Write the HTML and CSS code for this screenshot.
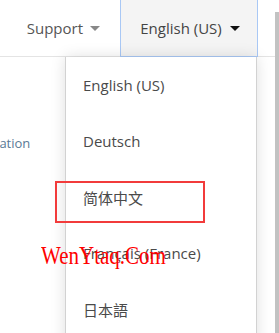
FILE: index.html
```html
<!DOCTYPE html>
<html lang="en">

<head>
    <meta charset="UTF-8">
    <meta name="viewport" content="width=device-width, initial-scale=1.0">
    <title>Language menu</title>
    <link rel="stylesheet" href="styles.css">
</head>

<body>
    <div class="page">
        <header class="topbar">
            <a href="#" class="nav-link">Support <span class="caret"></span></a>
            <button class="lang-button">English (US) <span class="caret dark"></span></button>
        </header>

        <main class="content">
            <p class="side-link">Documentation</p>
        </main>

        <ul class="lang-menu">
            <li>English (US)</li>
            <li>Deutsch</li>
            <li class="picked">简体中文</li>
            <li>Français (France)</li>
            <li>日本語</li>
        </ul>

        <div class="mark-box"></div>
        <div class="watermark">WenYtaq.Com</div>
    </div>

    <div class="scroll-track">
        <div class="scroll-thumb"></div>
    </div>
</body>

</html>
```

FILE: styles.css
```css
body {
    margin: 0;
    height: 333px;
    display: flex;
    overflow: hidden;
    background: white;
    font-family: "Open Sans", "Noto Sans CJK SC", sans-serif;
    color: #4a4a4a;
}

.page {
    position: relative;
    flex: 1;
}

.topbar {
    height: 56px;
    display: flex;
    justify-content: flex-end;
    align-items: stretch;
    padding-right: 17px;
    border-bottom: 1px solid #e4e4e4;
}

.nav-link {
    display: flex;
    align-items: center;
    gap: 7px;
    padding: 0 20px;
    font-size: 15px;
    color: #555;
    text-decoration: none;
}

.lang-button {
    width: 138px;
    display: flex;
    align-items: center;
    justify-content: center;
    gap: 8px;
    margin: 0;
    padding: 0 0 0 2px;
    font-family: inherit;
    font-size: 15px;
    color: #444;
    background: #f4f4f4;
    border: 1px solid #a9c8f5;
    border-top: none;
    margin-bottom: -1px;
}

.caret {
    width: 0;
    height: 0;
    border-left: 5px solid transparent;
    border-right: 5px solid transparent;
    border-top: 5px solid #888;
}

.caret.dark {
    border-top-color: #111;
}

.content {
    padding: 77px 0 0;
}

.side-link {
    margin: 0 0 0 -64px;
    font-size: 13px;
    color: #5a7a96;
}

/* dropdown */
.lang-menu {
    position: absolute;
    top: 57px;
    left: 65px;
    width: 190px;
    height: 290px;
    margin: 0;
    padding: 0;
    list-style: none;
    background: white;
    border-left: 1px solid #d2d2d2;
    border-right: 1px solid #d2d2d2;
    box-shadow: 0 0 14px rgba(0, 0, 0, 0.13);
}

.lang-menu li {
    height: 56px;
    display: flex;
    align-items: center;
    padding-left: 17px;
    font-size: 15px;
    color: #4a4a4a;
}

.mark-box {
    position: absolute;
    top: 181px;
    left: 55px;
    width: 146px;
    height: 38px;
    border: 2px solid #f23b3b;
}

.watermark {
    position: absolute;
    top: 242px;
    left: 41px;
    font-family: "Liberation Serif", serif;
    font-size: 25px;
    color: #ff0000;
    transform: scaleX(0.84);
    transform-origin: left;
}

.scroll-track {
    width: 4px;
    padding-top: 12px;
}

.scroll-thumb {
    height: 100%;
    background: #c2c2c2;
}
```
